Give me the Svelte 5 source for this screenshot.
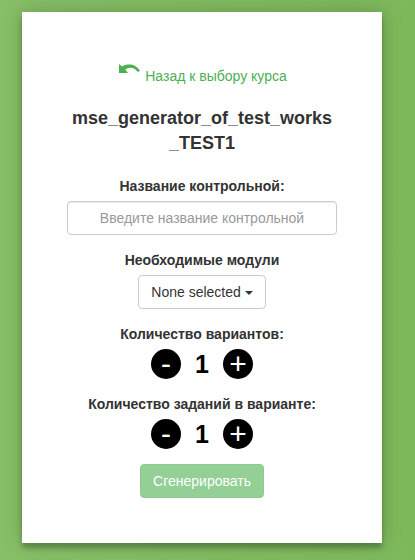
<script>
  let name = $state('');
  let variants = $state(1);
  let tasks = $state(1);
</script>

{#snippet counter(value, change)}
  <div class="counter">
    <button class="round" type="button" onclick={() => change(-1)}>-</button>
    <span class="value">{value}</span>
    <button class="round" type="button" onclick={() => change(1)}>+</button>
  </div>
{/snippet}

<main>
  <form class="card">
    <a class="back" href="#courses">
      <svg width="21" height="10" viewBox="0 0 21 10" aria-hidden="true">
        <path d="M0 0 L3 2.4 C9 -.9 17 -.2 21 6.9 L18.4 7.7 C15.7 3.4 10.4 2.2 6.3 5.6 L9 9 L0 9 Z" />
      </svg>
      <span>Назад к выбору курса</span>
    </a>
    <h4>mse_generator_of_test_works<wbr />_TEST1</h4>

    <label for="name">Название контрольной:</label>
    <input id="name" placeholder="Введите название контрольной" bind:value={name} />

    <div class="label">Необходимые модули</div>
    <button class="select" type="button">None selected <span class="caret"></span></button>

    <div class="label">Количество вариантов:</div>
    {@render counter(variants, (d) => (variants = Math.max(1, variants + d)))}

    <div class="label">Количество заданий в варианте:</div>
    {@render counter(tasks, (d) => (tasks = Math.max(1, tasks + d)))}

    <button class="submit" type="submit" disabled>Сгенерировать</button>
  </form>
</main>

<style>
  main {
    box-sizing: border-box;
    height: 560px;
    padding: 12px 33px 0 22px;
    overflow: hidden;
    background: linear-gradient(to right, #87bf67, #7db95b);
    font-family: 'Liberation Sans', Arial, sans-serif;
    font-size: 14px;
    line-height: 20px;
    color: #333;
  }
  .card {
    box-sizing: border-box;
    width: 360px;
    height: 531px;
    padding: 50px 45px 0;
    background: #fff;
    box-shadow: 0 0 20px 0 rgba(0, 0, 0, 0.2), 0 5px 5px 0 rgba(0, 0, 0, 0.24);
    display: flex;
    flex-direction: column;
    align-items: center;
  }
  .back {
    display: flex;
    gap: 5.5px;
    height: 24px;
    padding-left: 1.5px;
    color: #4caf50;
    text-decoration: none;
  }
  .back svg {
    margin-top: 2px;
    fill: #4caf50;
  }
  .back span {
    margin-top: 4px;
  }
  h4 {
    width: 270px;
    margin: 20px 0;
    font-size: 18px;
    line-height: 25px;
    font-weight: 700;
    text-align: center;
  }
  label,
  .label {
    height: 20px;
    margin-bottom: 5px;
    font-weight: 700;
  }
  input {
    box-sizing: border-box;
    width: 270px;
    height: 34px;
    margin: 0 0 15px;
    padding: 6px 12px;
    border: 1px solid #ccc;
    border-radius: 4px;
    box-shadow: inset 0 1px 1px rgba(0, 0, 0, 0.075);
    font: inherit;
    color: #555;
    text-align: center;
  }
  input::placeholder {
    color: #999;
    opacity: 1;
  }
  button {
    box-sizing: border-box;
    font: inherit;
  }
  .select,
  .submit {
    height: 34px;
    padding: 6px 12px;
    border: 1px solid #ccc;
    border-radius: 4px;
    background: #fff;
    color: #333;
    white-space: nowrap;
  }
  .select {
    margin-bottom: 15px;
  }
  .caret {
    display: inline-block;
    vertical-align: middle;
    border-top: 4px solid;
    border-left: 4px solid transparent;
    border-right: 4px solid transparent;
  }
  .counter {
    display: flex;
    align-items: center;
    height: 30px;
    margin-bottom: 15px;
    color: #000;
  }
  .round {
    display: flex;
    align-items: center;
    justify-content: center;
    width: 30px;
    height: 30px;
    padding: 0;
    border: 0;
    border-radius: 50%;
    background: #000;
    color: #fff;
    font-size: 30px;
    line-height: 30px;
  }
  .value {
    width: 42px;
    font-size: 25px;
    line-height: 30px;
    font-weight: 700;
    text-align: center;
  }
  .submit {
    border-color: #8ccb8f;
    background: #94cf96;
    color: #fff;
  }
</style>
